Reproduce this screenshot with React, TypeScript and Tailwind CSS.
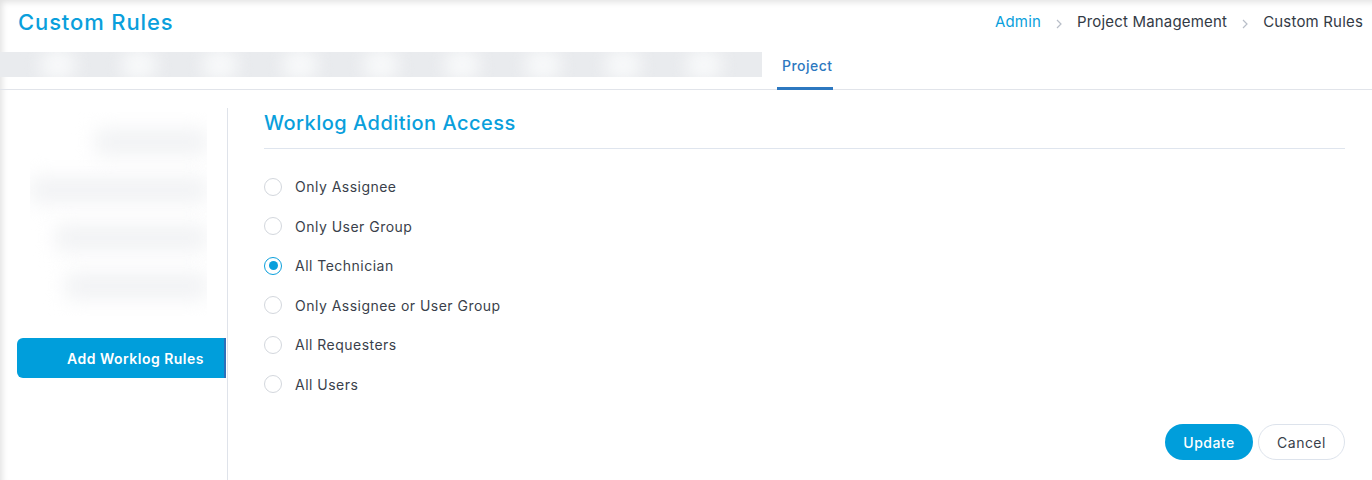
import React, { useState } from "react";

const options = [
  "Only Assignee",
  "Only User Group",
  "All Technician",
  "Only Assignee or User Group",
  "All Requesters",
  "All Users",
];

const Crumb = () => (
  <svg width="8" height="12" viewBox="0 0 8 12" className="mx-[14px] mt-[3px]">
    <path d="M2 2l4 4-4 4" fill="none" stroke="#b8bec8" strokeWidth="1.2" />
  </svg>
);

const Radio = ({ checked }: { checked: boolean }) =>
  checked ? (
    <span className="w-[18px] h-[18px] rounded-full border-[1.5px] border-[#0a9fdc] flex items-center justify-center shrink-0">
      <span className="w-[9px] h-[9px] rounded-full bg-[#0a9fdc]" />
    </span>
  ) : (
    <span className="w-[18px] h-[18px] rounded-full border border-[#d3d7dd] shrink-0" />
  );

const App = () => {
  const [selected, setSelected] = useState(2);

  return (
    <div
      className="relative w-full h-[480px] bg-white overflow-hidden tracking-[0.03em] shadow-[inset_4px_4px_6px_-2px_rgba(0,0,0,0.12)]"
      style={{ fontFamily: "Inter, 'Noto Sans', sans-serif" }}
    >
      <div className="flex items-center justify-between h-[44px] pl-[18px] pr-[9px]">
        <h1 className="text-[22px] font-medium text-[#0a9fdc] tracking-[0.04em]">Custom Rules</h1>
        <div className="flex items-center text-[15px] text-[#333a45] tracking-[0.012em]">
          <span className="text-[#0a9fdc]">Admin</span>
          <Crumb />
          <span>Project Management</span>
          <Crumb />
          <span>Custom Rules</span>
        </div>
      </div>

      <div className="flex items-stretch h-[46px] border-b border-[#e1e4ea]">
        <div className="w-[762px] h-[25px] mt-[8px] bg-[#e9ebee] overflow-hidden flex justify-between items-center px-[40px]">
          {[0, 1, 2, 3, 4, 5, 6, 7, 8].map((i) => (
            <span key={i} className="w-[36px] h-[30px] rounded-full bg-[#f9fafb] blur-[9px]" />
          ))}
        </div>
        <div className="ml-[15px] pl-[5px] flex items-center border-b-[3px] border-[#2d78c0] text-[14px] font-medium text-[#2d78c0] -mb-px">
          Project
        </div>
      </div>

      <div className="flex mt-[18px] h-[372px]">
        <div className="w-[228px] shrink-0 pl-[17px] border-r border-[#dfe3ea]">
          <div className="ml-[13px] mt-[4px] w-[177px] h-[204px] flex flex-col items-end justify-around py-[6px] overflow-hidden">
            {[112, 177, 152, 142].map((w, i) => (
              <span key={i} className="h-[26px] rounded-md bg-[#f1f2f4] blur-[10px]" style={{ width: w }} />
            ))}
          </div>
          <button className="mt-[22px] w-[209px] h-[40px] rounded-l-[6px] bg-[#009edb] border-r-[2px] border-[#2f6fb8] text-white text-[14px] font-semibold pl-[30px]">
            Add Worklog Rules
          </button>
        </div>

        <div className="flex-1 pl-[36px] pr-[27px]">
          <div className="h-[41px] border-b border-[#dfe5ee] pt-[1px]">
            <h2 className="text-[20px] leading-[28px] font-medium text-[#0a9fdc]">
              Worklog Addition Access
            </h2>
          </div>
          <div className="mt-[18px] flex flex-col">
            {options.map((o, i) => (
              <label
                key={o}
                onClick={() => setSelected(i)}
                className="h-[39.5px] flex items-center gap-[13px] text-[14px] text-[#3a3f4b] cursor-pointer"
              >
                <Radio checked={selected === i} />
                <span>{o}</span>
              </label>
            ))}
          </div>
          <div className="mt-[20px] flex justify-end gap-[5px]">
            <button className="w-[88px] h-[36px] rounded-full bg-[#009edb] text-white text-[14px] font-medium">
              Update
            </button>
            <button className="w-[87px] h-[36px] rounded-full border border-[#dde3ec] text-[#3a3f4b] text-[14px]">
              Cancel
            </button>
          </div>
        </div>
      </div>
    </div>
  );
};

export default App;
